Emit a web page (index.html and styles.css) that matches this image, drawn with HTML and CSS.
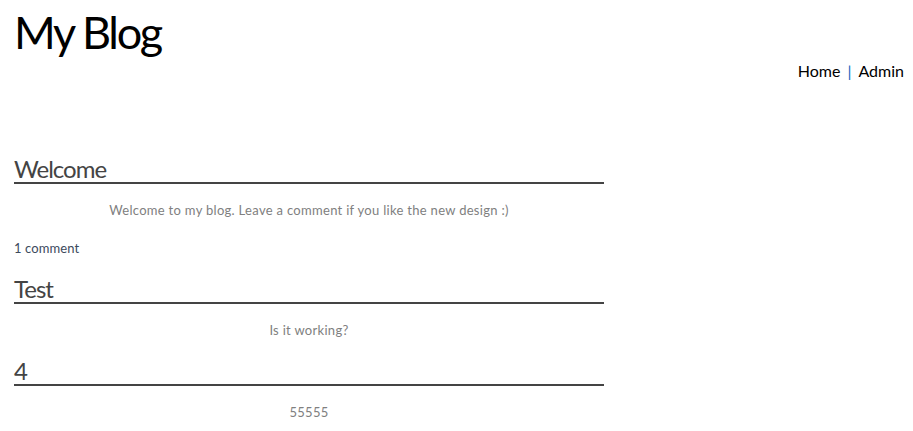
FILE: index.html
```html
<!DOCTYPE html>
<html lang="en">
<head>
    <meta charset="UTF-8">
    <meta name="viewport" content="width=device-width, initial-scale=1.0">
    <title>My Blog</title>
    <link rel="stylesheet" href="styles.css">
</head>
<body>

<div class="header">
    <h1>My Blog</h1>
    <div class="nav">
        <a href="#">Home</a><span class="sep">|</span><a href="#">Admin</a>
    </div>
</div>

<div class="content">
    <div class="post">
        <h2>Welcome</h2>
        <p>Welcome to my blog. Leave a comment if you like the new design :)</p>
        <div class="post-footer"><a href="#">1 comment</a></div>
    </div>
    <div class="post">
        <h2>Test</h2>
        <p>Is it working?</p>
    </div>
    <div class="post">
        <h2>4</h2>
        <p>55555</p>
    </div>
</div>

</body>
</html>
```
FILE: styles.css
```css
body {
    margin: 0;
    padding: 0 9px 0 14px;
    font-family: "Trebuchet MS", Lato, sans-serif;
    background-color: #fff;
}

a {
    text-decoration: none;
}

.header h1 {
    margin: 0;
    padding-top: 5px;
    font-size: 45px;
    line-height: 54px;
    letter-spacing: -2.3px;
    font-weight: normal;
    color: #000;
}

.nav {
    margin-top: 2px;
    text-align: right;
    font-size: 16px;
    line-height: 20px;
}

.nav a {
    color: #000;
}

.nav .sep {
    color: #1565c0;
    margin: 0 7px;
}

.content {
    width: 590px;
    margin-top: 74px;
}

.post {
    margin-bottom: 19px;
}

.post h2 {
    margin: 0;
    font-size: 24px;
    line-height: 27px;
    letter-spacing: -1px;
    font-weight: normal;
    color: #444;
    border-bottom: 2px solid #444;
}

.post p {
    margin: 18px 0 0;
    font-size: 13px;
    line-height: 16px;
    letter-spacing: 0.3px;
    color: #808080;
    text-align: center;
}

.post-footer {
    margin-top: 22px;
    font-size: 13px;
    line-height: 16px;
    letter-spacing: 0.1px;
}

.post-footer a {
    color: #3c4a5c;
}
```
